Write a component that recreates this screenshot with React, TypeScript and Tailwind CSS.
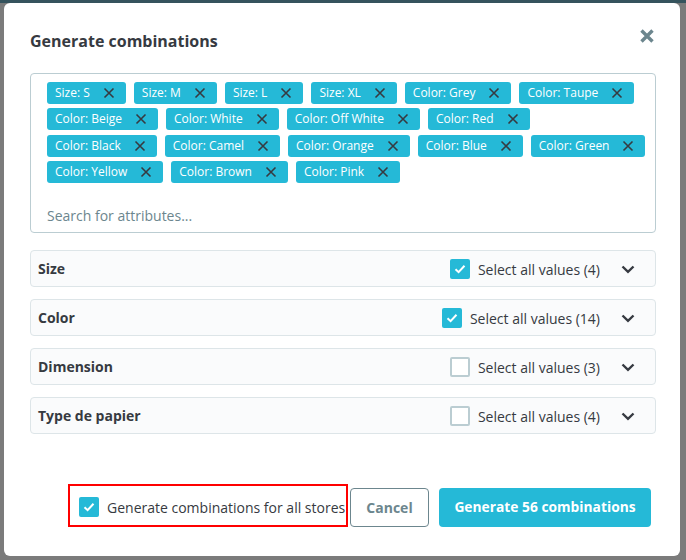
import React from "react"

const tagRows = [
  ["Size: S", "Size: M", "Size: L", "Size: XL", "Color: Grey", "Color: Taupe"],
  ["Color: Beige", "Color: White", "Color: Off White", "Color: Red"],
  ["Color: Black", "Color: Camel", "Color: Orange", "Color: Blue", "Color: Green"],
  ["Color: Yellow", "Color: Brown", "Color: Pink"],
]

const attributes = [
  { name: "Size", count: 4, checked: true },
  { name: "Color", count: 14, checked: true },
  { name: "Dimension", count: 3, checked: false },
  { name: "Type de papier", count: 4, checked: false },
]

function Check({ checked }: { checked: boolean }) {
  if (!checked) {
    return <span className="block w-[20px] h-[20px] rounded-[2px] border-2 border-[#bbcdd2] bg-white shrink-0" />
  }
  return (
    <span className="flex items-center justify-center w-[20px] h-[20px] rounded-[2px] bg-[#25b9d7] shrink-0">
      <svg width="14" height="14" viewBox="0 0 14 14">
        <path d="M2.5 7.3 L5.6 10.2 L11.5 3.8" fill="none" stroke="white" strokeWidth="2" />
      </svg>
    </span>
  )
}

function Tag({ label }: { label: string }) {
  return (
    <span className="flex items-center shrink-0 whitespace-nowrap h-[22px] rounded-[3px] bg-[#25b9d7] pl-2 pr-[9px] text-[12px] leading-[16px] text-white">
      {label}
      <svg className="ml-[11px] shrink-0" width="16" height="16" viewBox="0 0 16 16">
        <path d="M3.5 3.5 L12.5 12.5 M12.5 3.5 L3.5 12.5" stroke="#363a41" strokeWidth="1.6" />
      </svg>
    </span>
  )
}

export default function App() {
  return (
    <div
      className="w-[686px] h-[560px] bg-[#7b7b7b] border-t-[3px] border-[#35535d] pl-[4px] pr-[6px] overflow-hidden"
      style={{ fontFamily: '"Open Sans", sans-serif' }}
    >
      <div className="bg-white rounded-[6px] pt-[27px] pb-[29px] pl-[26px] pr-[24px] text-[#363a41]">
        <div className="flex items-start justify-between">
          <h2 className="text-[16px] leading-[22px] font-bold">Generate combinations</h2>
          <svg className="mt-[-2px] mr-[1px]" width="16" height="16" viewBox="0 0 16 16">
            <path d="M2.5 2.5 L13.5 13.5 M13.5 2.5 L2.5 13.5" stroke="#6c868e" strokeWidth="3.4" />
          </svg>
        </div>

        <div className="mt-[21px] h-[160px] border border-[#bbcdd2] rounded-[4px] pt-[8px] px-4">
          <div className="flex flex-col gap-y-[4.3px]">
            {tagRows.map((row, i) => (
              <div key={i} className="flex gap-x-2">
                {row.map((t) => (
                  <Tag key={t} label={t} />
                ))}
              </div>
            ))}
          </div>
          <div className="mt-[23px] h-[20px] leading-[20px] text-[14px] text-[#6c868e]">Search for attributes...</div>
        </div>

        <div className="mt-[17px] flex flex-col gap-[12px]">
          {attributes.map((a) => (
            <div
              key={a.name}
              className="h-[37px] flex items-center border border-[#dde5e8] rounded-[4px] bg-[#fafbfc] pl-[7px] pr-[15px]"
            >
              <span className="text-[14px] font-bold flex-1">{a.name}</span>
              <Check checked={a.checked} />
              <span className="ml-2 text-[14px] pt-[2px]">Select all values ({a.count})</span>
              <svg className="ml-[16px]" width="24" height="24" viewBox="0 0 24 24">
                <path d="M6.5 9.5 L12 14.8 L17.5 9.5" fill="none" stroke="#363a41" strokeWidth="2.4" />
              </svg>
            </div>
          ))}
        </div>

        <div className="mt-[50px] flex items-end justify-end pr-[5px]">
          <div className="w-[280px] h-[43px] border-2 border-[#ff0000] flex items-center pl-[9px] pt-[3px] whitespace-nowrap">
            <Check checked={true} />
            <span className="ml-2 text-[14px]">Generate combinations for all stores</span>
          </div>
          <button className="ml-[2px] w-[79px] h-[39px] rounded-[4px] border border-[#6c868e] text-[14px] font-bold text-[#6c868e] bg-white">
            Cancel
          </button>
          <button className="ml-[10px] w-[212px] h-[39px] rounded-[4px] bg-[#25b9d7] text-[13.8px] font-bold text-white">
            Generate 56 combinations
          </button>
        </div>
      </div>
    </div>
  )
}
